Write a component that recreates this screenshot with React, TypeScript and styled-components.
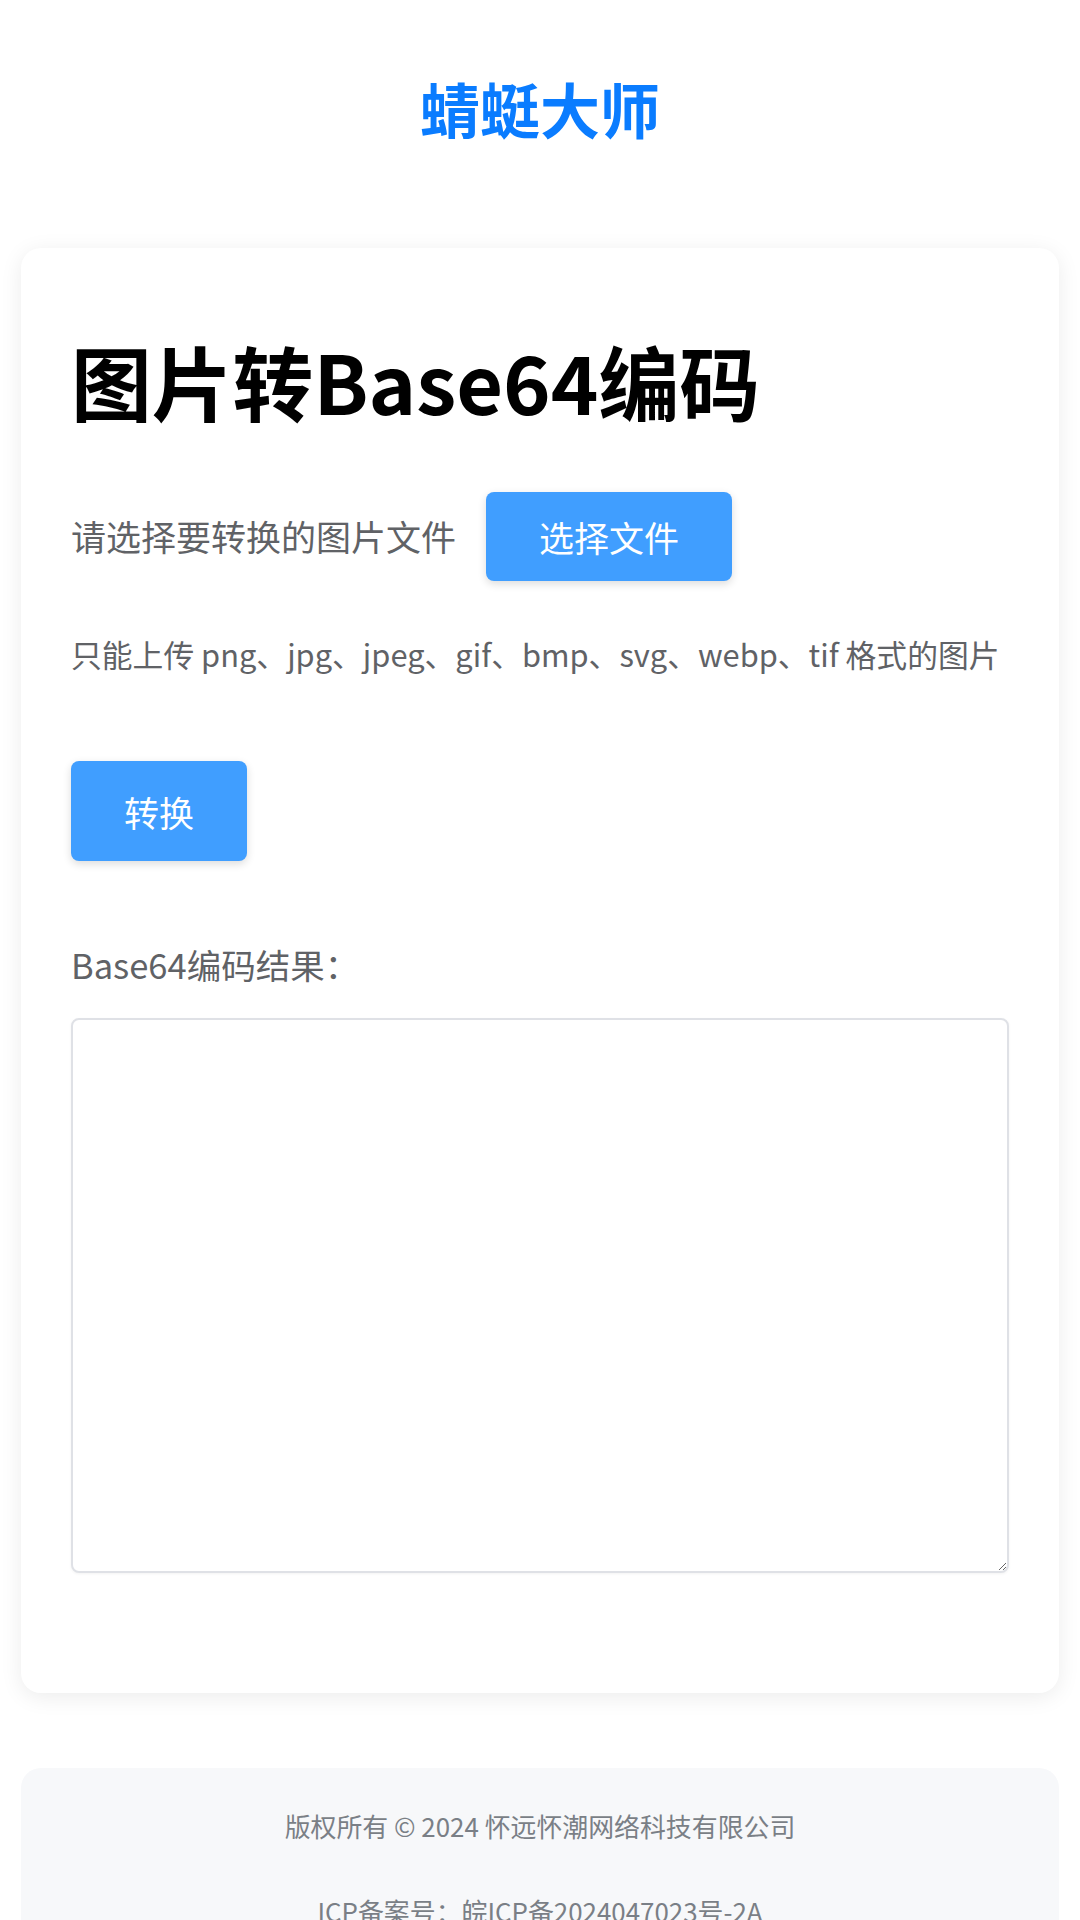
import React from "react";
import styled, { createGlobalStyle } from "styled-components";

const GlobalStyle = createGlobalStyle`
  html, body {
    margin: 0;
    padding: 0;
    background: #ffffff;
  }
  body {
    font-family: "Noto Sans CJK SC", "Noto Sans", sans-serif;
    color: #303133;
  }
  * { box-sizing: border-box; }
`;

const Page = styled.div`
  display: flex;
  flex-direction: column;
  padding: 72px 21px 0;
`;

const Header = styled.header`
  display: flex;
  justify-content: center;
  margin-bottom: 104px;
`;

const Brand = styled.div`
  font-size: 60px;
  line-height: 72px;
  font-weight: 700;
  color: #0a7cff;
`;

const Card = styled.main`
  background: #ffffff;
  border-radius: 20px;
  box-shadow: 0 4px 22px rgba(0, 0, 0, 0.08);
  padding: 84px 50px 120px;
  display: flex;
  flex-direction: column;
`;

const Title = styled.h1`
  margin: 0;
  font-size: 80.8px;
  line-height: 96px;
  font-weight: 700;
  color: #000000;
`;

const UploadRow = styled.div`
  display: flex;
  align-items: center;
  gap: 30px;
  margin-top: 64px;
`;

const Label = styled.span<{ $size: number }>`
  font-size: ${(p) => p.$size}px;
  line-height: 1.5;
  color: #606266;
`;

const Button = styled.button<{ $height: number }>`
  height: ${(p) => p.$height}px;
  padding: 0 53px;
  border: none;
  border-radius: 8px;
  background: #409eff;
  color: #ffffff;
  font-family: inherit;
  font-size: 35px;
  line-height: 1;
  box-shadow: 0 3px 8px rgba(0, 0, 0, 0.14);
  cursor: pointer;
`;

const Hint = styled.p`
  margin: 50px 0 0;
  font-size: 30.8px;
  line-height: 46px;
  color: #606266;
  white-space: nowrap;
`;

const ConvertWrap = styled.div`
  margin-top: 84px;
  display: flex;
`;

const ResultLabel = styled.div`
  margin-top: 78px;
  font-size: 34.5px;
  line-height: 50px;
  color: #606266;
`;

const Output = styled.textarea`
  margin-top: 29px;
  width: 100%;
  height: 555px;
  border: 2px solid #dfe1e6;
  border-radius: 8px;
  background: #ffffff;
  box-shadow: 0 1px 3px rgba(0, 0, 0, 0.05);
  resize: both;
  font-family: inherit;
  font-size: 28px;
  padding: 12px;
  outline: none;
`;

const Footer = styled.footer`
  margin-top: 75px;
  background: #f7f8fa;
  border-radius: 20px;
  padding: 39px 20px 40px;
  display: flex;
  flex-direction: column;
  align-items: center;
  gap: 47px;
`;

const FooterLine = styled.p`
  margin: 0;
  font-size: 25.9px;
  line-height: 38px;
  color: #7a7f86;
`;

export default function App() {
  return (
    <>
      <GlobalStyle />
      <Page>
        <Header>
          <Brand>蜻蜓大师</Brand>
        </Header>
        <Card>
          <Title>图片转Base64编码</Title>
          <UploadRow>
            <Label $size={35}>请选择要转换的图片文件</Label>
            <Button $height={89}>选择文件</Button>
          </UploadRow>
          <Hint>只能上传 png、jpg、jpeg、gif、bmp、svg、webp、tif 格式的图片</Hint>
          <ConvertWrap>
            <Button $height={100}>转换</Button>
          </ConvertWrap>
          <ResultLabel>Base64编码结果：</ResultLabel>
          <Output readOnly />
        </Card>
        <Footer>
          <FooterLine>版权所有 © 2024 怀远怀潮网络科技有限公司</FooterLine>
          <FooterLine>ICP备案号：皖ICP备2024047023号-2A</FooterLine>
        </Footer>
      </Page>
    </>
  );
}
